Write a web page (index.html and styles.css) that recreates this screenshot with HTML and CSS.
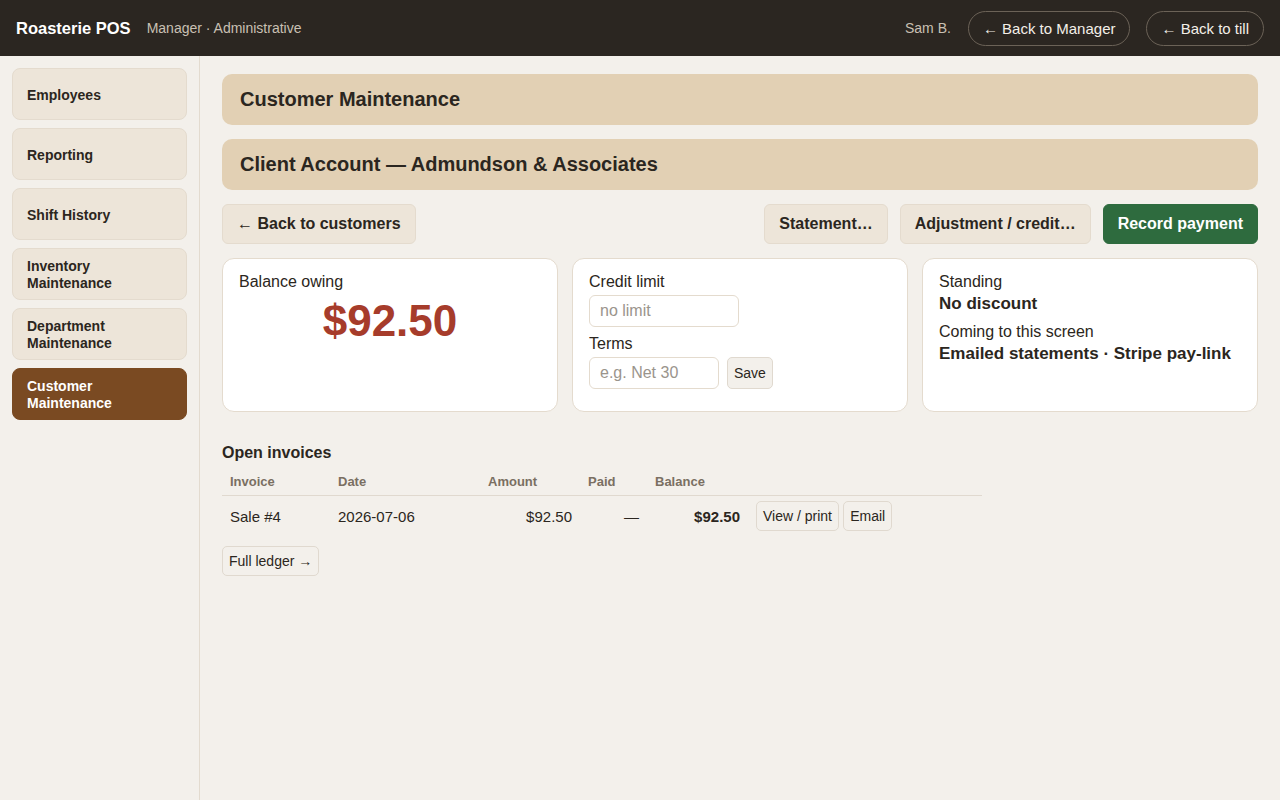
FILE: index.html
```html
<!DOCTYPE html>
<html lang="en">
<head>
    <meta charset="UTF-8">
    <meta name="viewport" content="width=device-width, initial-scale=1.0">
    <title>Roasterie POS - Customer Maintenance</title>
    <link rel="stylesheet" href="styles.css">
</head>
<body>
    <header class="topbar">
        <div class="brand">Roasterie POS</div>
        <div class="context">Manager · Administrative</div>
        <div class="topbar-right">
            <span class="user">Sam B.</span>
            <button class="pill-btn">← Back to Manager</button>
            <button class="pill-btn">← Back to till</button>
        </div>
    </header>

    <div class="layout">
        <nav class="sidebar">
            <button class="nav-btn">Employees</button>
            <button class="nav-btn">Reporting</button>
            <button class="nav-btn">Shift History</button>
            <button class="nav-btn">Inventory Maintenance</button>
            <button class="nav-btn">Department Maintenance</button>
            <button class="nav-btn active">Customer Maintenance</button>
        </nav>

        <main class="main">
            <div class="panel-title">Customer Maintenance</div>
            <div class="panel-title">Client Account — Admundson &amp; Associates</div>

            <div class="actions">
                <button class="btn">← Back to customers</button>
                <div class="spacer"></div>
                <button class="btn">Statement…</button>
                <button class="btn">Adjustment / credit…</button>
                <button class="btn primary">Record payment</button>
            </div>

            <div class="cards">
                <div class="card">
                    <div class="label">Balance owing</div>
                    <div class="balance">$92.50</div>
                </div>
                <div class="card">
                    <div class="label">Credit limit</div>
                    <input class="field wide" type="text" placeholder="no limit">
                    <div class="label terms">Terms</div>
                    <div class="field-row">
                        <input class="field" type="text" placeholder="e.g. Net 30">
                        <button class="small-btn tall">Save</button>
                    </div>
                </div>
                <div class="card">
                    <div class="label">Standing</div>
                    <div class="value">No discount</div>
                    <div class="label coming">Coming to this screen</div>
                    <div class="value">Emailed statements · Stripe pay-link</div>
                </div>
            </div>

            <h2 class="section-title">Open invoices</h2>
            <table class="invoices">
                <thead>
                    <tr>
                        <th class="c-inv">Invoice</th>
                        <th class="c-date">Date</th>
                        <th class="c-amt">Amount</th>
                        <th class="c-paid">Paid</th>
                        <th class="c-bal">Balance</th>
                        <th></th>
                    </tr>
                </thead>
                <tbody>
                    <tr>
                        <td>Sale #4</td>
                        <td>2026-07-06</td>
                        <td class="num">$92.50</td>
                        <td class="num">—</td>
                        <td class="num strong">$92.50</td>
                        <td class="row-actions">
                            <button class="small-btn">View / print</button>
                            <button class="small-btn">Email</button>
                        </td>
                    </tr>
                </tbody>
            </table>
            <button class="small-btn ledger">Full ledger →</button>
        </main>
    </div>
</body>
</html>
```

FILE: styles.css
```css
* {
    box-sizing: border-box;
}

body {
    margin: 0;
    font-family: "Liberation Sans", Arial, sans-serif;
    background: #f3f0eb;
    color: #2b2620;
}

button, input {
    font-family: inherit;
}

.topbar {
    height: 56px;
    background: #2b2621;
    color: #fff;
    display: flex;
    align-items: center;
    padding: 0 16px;
}

.brand {
    font-weight: bold;
    font-size: 16.5px;
}

.context {
    margin-left: 16px;
    font-size: 14px;
    color: #c9c0b3;
}

.topbar-right {
    margin-left: auto;
    display: flex;
    align-items: center;
    gap: 16px;
}

.user {
    font-size: 14px;
    color: #c9c0b3;
    margin-right: 1px;
}

.pill-btn {
    height: 35px;
    padding: 0 14px;
    border-radius: 18px;
    border: 1px solid #6b6257;
    background: transparent;
    color: #f3efe8;
    font-size: 15px;
}

.layout {
    display: flex;
    min-height: 744px;
}

.sidebar {
    width: 200px;
    flex-shrink: 0;
    border-right: 1px solid #e3dbcf;
    padding: 12px 12px;
    display: flex;
    flex-direction: column;
    gap: 8px;
}

.nav-btn {
    width: 175px;
    height: 52px;
    text-align: left;
    padding: 2px 14px 0;
    background: #ede5d9;
    border: 1px solid #e4dbce;
    border-radius: 8px;
    font-size: 14px;
    font-weight: bold;
    color: #2b2620;
    line-height: 17px;
}

.nav-btn.active {
    background: #7a4a22;
    border-color: #7a4a22;
    color: #fff;
}

.main {
    flex: 1;
    padding: 18px 22px;
}

.panel-title {
    background: #e2d0b4;
    border-radius: 10px;
    height: 51px;
    display: flex;
    align-items: center;
    padding: 0 18px;
    font-size: 20px;
    font-weight: bold;
    margin-bottom: 14px;
}

.actions {
    display: flex;
    gap: 12px;
    margin-bottom: 14px;
}

.spacer {
    flex: 1;
}

.btn {
    height: 40px;
    padding: 0 14px;
    background: #ede5d9;
    border: 1px solid #e4dbce;
    border-radius: 6px;
    font-size: 16px;
    font-weight: bold;
    color: #2b2620;
}

.btn.primary {
    background: #2e6b3e;
    border-color: #2e6b3e;
    color: #fff;
}

.cards {
    display: grid;
    grid-template-columns: 1fr 1fr 1fr;
    gap: 14px;
}

.card {
    background: #fff;
    border: 1px solid #e4dbce;
    border-radius: 12px;
    height: 154px;
    padding: 13px 16px;
}

.label {
    font-size: 16px;
    line-height: 20px;
}

.balance {
    text-align: center;
    font-size: 44px;
    font-weight: bold;
    color: #a63c2b;
    line-height: 58px;
}

.field {
    display: block;
    width: 130px;
    height: 32px;
    border: 1px solid #e4dbce;
    border-radius: 6px;
    padding: 0 10px;
    font-size: 16px;
    color: #2b2620;
    margin-top: 3px;
}

.field.wide {
    width: 150px;
}

.field::placeholder {
    color: #9a948c;
}

.terms {
    margin-top: 7px;
}

.field-row {
    display: flex;
    gap: 8px;
    align-items: flex-start;
}

.value {
    font-size: 17px;
    font-weight: bold;
    line-height: 22px;
    white-space: nowrap;
    margin-top: 1px;
}

.coming {
    margin-top: 7px;
}

.section-title {
    font-size: 16px;
    margin: 32px 0 8px;
}

.invoices {
    width: 760px;
    border-collapse: collapse;
}

.invoices th {
    text-align: left;
    font-size: 13px;
    color: #7a6f62;
    padding: 4px 8px 6px;
    border-bottom: 1px solid #e0d9cf;
}

.c-inv { width: 108px; }
.c-date { width: 150px; }
.c-amt { width: 100px; }
.c-paid { width: 67px; }
.c-bal { width: 101px; }

.invoices td {
    font-size: 15px;
    padding: 5px 8px 7px;
    height: 43px;
}

.invoices td.num {
    text-align: right;
}

.invoices td.strong {
    font-weight: bold;
}

.row-actions {
    white-space: nowrap;
}

.small-btn {
    height: 30px;
    padding: 0 6px;
    background: #f3f0eb;
    border: 1px solid #e0d9cf;
    border-radius: 5px;
    font-size: 14px;
    color: #2b2620;
}

.small-btn.tall {
    height: 32px;
    margin-top: 3px;
}

.ledger {
    margin-top: 7px;
}
```
